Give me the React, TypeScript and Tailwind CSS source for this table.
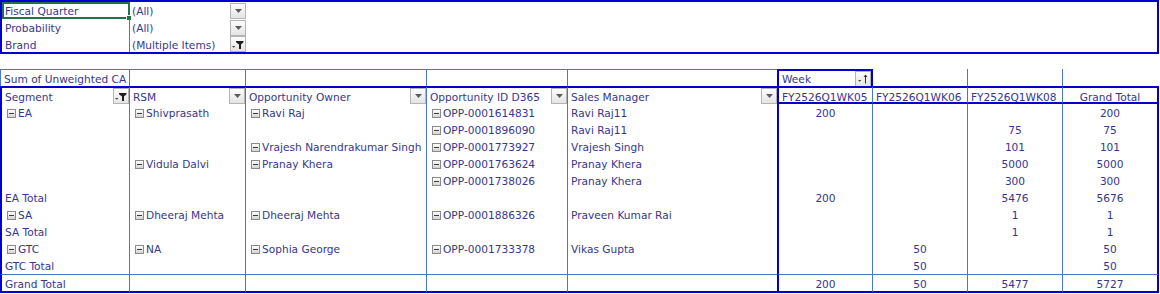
import React from "react";

// Pivot layout: columns A..I of the sheet
const body: string[][] = [
  ["+EA", "+Shivprasath", "+Ravi Raj", "+OPP-0001614831", "Ravi Raj11", "200", "", "", "200"],
  ["", "", "", "+OPP-0001896090", "Ravi Raj11", "", "", "75", "75"],
  ["", "", "+Vrajesh Narendrakumar Singh", "+OPP-0001773927", "Vrajesh Singh", "", "", "101", "101"],
  ["", "+Vidula Dalvi", "+Pranay Khera", "+OPP-0001763624", "Pranay Khera", "", "", "5000", "5000"],
  ["", "", "", "+OPP-0001738026", "Pranay Khera", "", "", "300", "300"],
  ["EA Total", "", "", "", "", "200", "", "5476", "5676"],
  ["+SA", "+Dheeraj Mehta", "+Dheeraj Mehta", "+OPP-0001886326", "Praveen Kumar Rai", "", "", "1", "1"],
  ["SA Total", "", "", "", "", "", "", "1", "1"],
  ["+GTC", "+NA", "+Sophia George", "+OPP-0001733378", "Vikas Gupta", "", "50", "", "50"],
  ["GTC Total", "", "", "", "", "", "50", "", "50"],
];
const grand = ["Grand Total", "", "", "", "", "200", "50", "5477", "5727"];

type Kind = "top" | "head" | "body" | "grand";

// border classes per row kind / column
function edges(kind: Kind, col: number) {
  const c: string[] = [];
  // verticals
  if (col === 0) c.push(kind === "top" ? "border-l border-l-[#4a76cf]" : "border-l-2 border-l-[#0000cd]");
  if (col === 5) c.push("border-l-2 border-l-[#0000cd]");
  if (col <= 3 || col === 6 || col === 7) c.push("border-r border-r-[#4a76cf]");
  if (col === 5) c.push(kind === "top" ? "border-r-2 border-r-[#0000cd]" : "border-r border-r-[#4a76cf]");
  if (col === 8 && kind !== "top") c.push("border-r-2 border-r-[#0000cd]");
  // horizontals
  if (kind === "top") {
    if (col <= 4) c.push("border-t border-t-[#4a76cf]");
    if (col === 5) c.push("border-t-2 border-t-[#0000cd]");
  }
  if (kind === "head") {
    c.push("border-t-2 border-t-[#0000cd]");
    if (col >= 5) c.push("border-b-2 border-b-[#0000cd]");
  }
  if (kind === "grand") c.push("border-t border-t-[#4a76cf] border-b-2 border-b-[#0000cd]");
  return c.join(" ");
}

const heights: Record<Kind, string> = {
  top: "h-[17px]",
  head: "h-[18px]",
  body: "h-[17px]",
  grand: "h-[19px]",
};

function Minus() {
  return (
    <span className="inline-flex w-[9px] h-[9px] ml-[2px] mr-[2px] shrink-0 items-center justify-center border border-[#8a8a8a] bg-linear-to-b from-white to-[#d4d4d4]">
      <span className="w-[5px] h-px bg-[#3a3a3a]" />
    </span>
  );
}

function DropBtn({ kind = "arrow" }: { kind?: "arrow" | "filter" | "sort" }) {
  return (
    <span className="w-[16px] h-[16px] shrink-0 flex items-center justify-center border border-[#b4b4b4] bg-linear-to-b from-[#fdfdfd] to-[#e4e4e4]">
      {kind === "arrow" && (
        <svg width="7" height="4" viewBox="0 0 7 4">
          <path d="M0 0h7L3.5 4z" fill="#5c5c5c" />
        </svg>
      )}
      {kind === "filter" && (
        <svg width="12" height="9" viewBox="0 0 12 9">
          <path d="M0 6h3.4L1.7 7.8z" fill="#444" />
          <path d="M4 1h7.5v1.3L9 4.6V9H7V4.6L4 2.3z" fill="#1e1e1e" />
        </svg>
      )}
      {kind === "sort" && (
        <svg width="12" height="10" viewBox="0 0 12 10">
          <path d="M1 6h3.4L2.7 7.8z" fill="#444" />
          <path d="M8.5 0.5L6.5 3h1.5v6.5h1V3h1.5z" fill="#333" />
        </svg>
      )}
    </span>
  );
}

function Cell({ kind, col, text, btn }: { kind: Kind; col: number; text: string; btn?: "arrow" | "filter" | "sort" }) {
  const num = col >= 5 && /^\d+$/.test(text);
  const exp = text.startsWith("+");
  const label = exp ? text.slice(1) : text;
  const shift = kind === "head" && col >= 5 ? "top-[2px]" : "top-px";
  return (
    <div
      className={`${heights[kind]} ${edges(kind, col)} flex items-center whitespace-nowrap overflow-hidden ${
        num ? "justify-center" : "pl-[3px]"
      } ${btn ? "justify-between pr-0" : ""}`}
    >
      <span className={`relative ${shift} flex items-center`}>
        {exp && <Minus />}
        {label}
      </span>
      {btn && <DropBtn kind={btn} />}
    </div>
  );
}

function FilterArea() {
  const rows = [
    ["Fiscal Quarter", "(All)", "arrow"],
    ["Probability", "(All)", "arrow"],
    ["Brand", "(Multiple Items)", "filter"],
  ] as const;
  return (
    <div className="w-[1159px] h-[54px] border-2 border-[#0000cd] grid grid-cols-[128px_116px_1fr] grid-rows-[17px_17px_16px]">
      {rows.map(([label, value, btn], i) => (
        <React.Fragment key={label}>
          <div
            className={`relative flex items-center whitespace-nowrap ${
              i === 0 ? "border-2 border-[#217346] pl-[1px]" : "border-r border-r-[#4a76cf] pl-[3px]"
            }`}
          >
            <span className="relative top-px">{label}</span>
            {i === 0 && (
              <span className="absolute -right-[4px] -bottom-[4px] w-[6px] h-[6px] bg-[#217346] border border-white" />
            )}
          </div>
          <div className="flex items-center justify-between pl-[2px]">
            <span className="relative top-px">{value}</span>
            <DropBtn kind={btn} />
          </div>
          <div />
        </React.Fragment>
      ))}
    </div>
  );
}

export default function App() {
  const topRow = ["Sum of Unweighted CA", "", "", "", "", "Week", "", "", ""];
  const headRow = ["Segment", "RSM", "Opportunity Owner", "Opportunity ID D365", "Sales Manager", "FY2526Q1WK05", "FY2526Q1WK06", "FY2526Q1WK08", "Grand Total"];
  const headBtns: ("arrow" | "filter" | undefined)[] = ["filter", "arrow", "arrow", "arrow", "arrow"];

  return (
    <div className="w-[1160px] h-[294px] bg-white overflow-hidden text-[10.6px] leading-none text-[#36368e] font-['DejaVu_Sans',sans-serif]">
      <FilterArea />

      <div className="mt-[15px] w-[1159px] grid grid-cols-[130px_116px_181px_141px_209px_96px_95px_95px_96px]">
        {topRow.map((t, i) => (
          <Cell key={`t${i}`} kind="top" col={i} text={t} btn={i === 5 ? "sort" : undefined} />
        ))}
        {headRow.map((t, i) =>
          i === 8 ? (
            <div key="h8" className={`h-[18px] ${edges("head", 8)} flex items-center justify-center whitespace-nowrap`}>
              <span className="relative top-[2px]">{t}</span>
            </div>
          ) : (
            <Cell key={`h${i}`} kind="head" col={i} text={t} btn={headBtns[i]} />
          )
        )}
        {body.map((r, ri) =>
          r.map((t, i) => <Cell key={`b${ri}-${i}`} kind="body" col={i} text={t} />)
        )}
        {grand.map((t, i) => (
          <Cell key={`g${i}`} kind="grand" col={i} text={t} />
        ))}
      </div>
    </div>
  );
}
